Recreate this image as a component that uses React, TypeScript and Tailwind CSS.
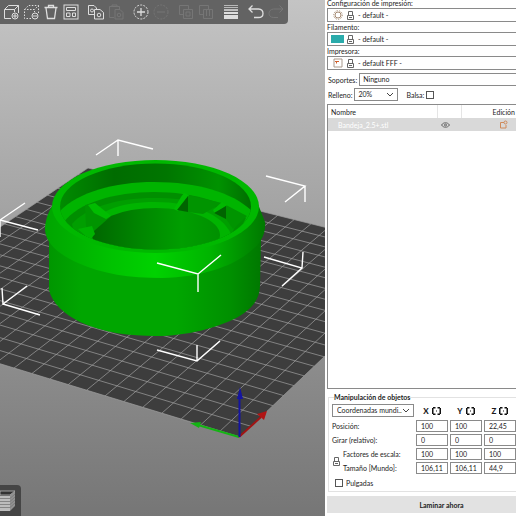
import type { ReactNode } from "react";

type Point = [number, number];

const BED_CORNERS: Point[] = [
  [240, 437],
  [-140, 321],
  [88, 168],
  [432, 254],
];

const BED_COLUMNS = 21;
const BED_ROWS = 20;

/** Projects a unit-square position on the print bed to scene coordinates. */
function project(u: number, v: number): Point {
  const [[x0, y0], [x1, y1], [x2, y2], [x3, y3]] = BED_CORNERS;
  const dx1 = x1 - x2;
  const dx2 = x3 - x2;
  const dy1 = y1 - y2;
  const dy2 = y3 - y2;
  const sx = x0 - x1 + x2 - x3;
  const sy = y0 - y1 + y2 - y3;
  const det = dx1 * dy2 - dx2 * dy1;
  const g = (sx * dy2 - dx2 * sy) / det;
  const h = (dx1 * sy - sx * dy1) / det;
  const w = g * u + h * v + 1;
  return [
    ((x1 - x0 + g * x1) * u + (x3 - x0 + h * x3) * v + x0) / w,
    ((y1 - y0 + g * y1) * u + (y3 - y0 + h * y3) * v + y0) / w,
  ];
}

function gridPath() {
  const parts: string[] = [];
  const seg = (a: Point, b: Point) => parts.push(`M${a[0]} ${a[1]}L${b[0]} ${b[1]}`);
  for (let i = 0; i <= BED_COLUMNS; i++) seg(project(i / BED_COLUMNS, 0), project(i / BED_COLUMNS, 1));
  for (let j = 0; j <= BED_ROWS; j++) seg(project(0, j / BED_ROWS), project(1, j / BED_ROWS));
  return parts.join("");
}

const BRACKETS = [
  "M96 155L118 140L153 149M118 140V156",
  "M266 176L305 186L285 202M305 186V202",
  "M25 203L0 220L38 230M0 220V237",
  "M2 288L3 304L27 286M3 304L40 315",
  "M264 257L302 268L282 286M302 268L303 252",
  "M157 350L197 361L220 341M197 361V345",
  "M157 263L198 274L221 255M198 274V292",
];

function Scene() {
  return (
    <svg
      viewBox="0 0 325 516"
      preserveAspectRatio="xMidYMid slice"
      className="block h-full w-full"
      role="img"
      aria-label="Vista 3D"
    >
      <defs>
        <linearGradient id="body">
          <stop offset="0" stopColor="#009600" />
          <stop offset="0.15" stopColor="#00a600" />
          <stop offset="0.6" stopColor="#00a600" />
          <stop offset="0.85" stopColor="#009000" />
          <stop offset="1" stopColor="#007800" />
        </linearGradient>
        <linearGradient id="flange">
          <stop offset="0" stopColor="#00a400" />
          <stop offset="0.3" stopColor="#00c200" />
          <stop offset="0.5" stopColor="#00d200" />
          <stop offset="0.75" stopColor="#00b400" />
          <stop offset="0.9" stopColor="#009000" />
          <stop offset="1" stopColor="#007800" />
        </linearGradient>
        <linearGradient id="wall">
          <stop offset="0" stopColor="#009000" />
          <stop offset="0.3" stopColor="#006c00" />
          <stop offset="0.55" stopColor="#007600" />
          <stop offset="0.8" stopColor="#009200" />
          <stop offset="1" stopColor="#006400" />
        </linearGradient>
        <linearGradient id="hole">
          <stop offset="0" stopColor="#006600" />
          <stop offset="0.35" stopColor="#008400" />
          <stop offset="0.7" stopColor="#009e00" />
          <stop offset="1" stopColor="#009000" />
        </linearGradient>
        <clipPath id="opening">
          <ellipse cx="155.5" cy="206.5" rx="95.5" ry="43" />
        </clipPath>
      </defs>

      <path
        d={`M${BED_CORNERS.map((p) => p.join(" ")).join("L")}Z`}
        fill="#3d3d3d"
      />
      <path d={gridPath()} stroke="#a0a0a0" strokeWidth="0.7" fill="none" />

      <path
        d="M49 238V290C52 303 64 314 80 322C104 333 130 336 156 336C186 336 218 328 238 317C251 309 260 300 260 285L261 238Z"
        fill="url(#body)"
      />
      <path
        d="M52 206C48 213 45 221 45 230C46 244 60 255 78 263C102 274 130 278 162 278C205 277 235 265 252 250C262 242 266 232 265 222L258 204Z"
        fill="url(#flange)"
      />
      <ellipse cx="155.5" cy="206.500" rx="103.500" ry="46.500" fill="#00b800" />
      <g clipPath="url(#opening)">
        <rect x="52" y="158" width="208" height="96" fill="url(#wall)" />
        <path d="M58 213C76 193 112 182 154 182C200 182 236 194 254 213L230 260H80Z" fill="#00b400" />
        <path d="M64 222C78 203 114 192 154 192C194 192 228 203 246 218L225 260H75Z" fill="#008e00" />
        <path d="M72 224C86 208 115 198 154 198C190 198 219 205 238 220L220 260H80Z" fill="#009e00" />
        <path d="M86 230C94 212 120 202 155 202C192 202 222 214 231 234L220 260H80Z" fill="#00b400" />
        <ellipse cx="156" cy="235" rx="64" ry="27" fill="url(#hole)" />
        <path d="M85 205L95 203L110 217L94 231L86 227Z" fill="#009400" />
        <path d="M88 205L95 203L111 216L106 219L94 213Z" fill="#00bc00" />
        <path d="M78 229L92 226L95 234L90 240Z" fill="#00b200" />
        <path d="M188 195L222 203L203 214L188 212Z" fill="#009400" />
        <path d="M181 197L184 193L189 195L178 211L174 209Z" fill="#00bc00" />
        <path d="M188 196V212L177 210Z" fill="#006400" />
        <path d="M226 205L247 216L233 229L226 219Z" fill="#009400" />
        <path d="M213 210L222 202L227 205L215 214Z" fill="#00b800" />
        <path d="M226 206V219L214 213Z" fill="#006400" />
      </g>

      {BRACKETS.map((d) => (
        <path key={d} d={d} fill="none" stroke="#fff" strokeWidth="1.4" />
      ))}

      <path d="M239 437L198 425" stroke="#14b414" strokeWidth="2" />
      <path d="M190 423L201 422L199 428Z" fill="#14b414" />
      <path d="M239 437L261 417" stroke="#a01414" strokeWidth="2" />
      <path d="M267 411L264 420L257 414Z" fill="#b01414" />
      <path d="M239.500 437V398" stroke="#1414a0" strokeWidth="2" />
      <path d="M240 387L243 399H237Z" fill="#1414a0" />
    </svg>
  );
}

function Glyph({ children }: { children: ReactNode }) {
  return (
    <svg viewBox="0 0 16 16" className="size-4" fill="none" stroke="currentColor" strokeWidth="1">
      {children}
    </svg>
  );
}

type Tool = { label: string; off?: boolean; art: ReactNode };

const TOOLS: Tool[][] = [
  [
    {
      label: "Añadir",
      art: (
        <>
          <path d="M8 14.500H1.500V5.500H11.500V8M1.500 5.500L5.500 1.500H15.500L11.500 5.500M15.500 1.500V9" />
          <circle cx="12" cy="12" r="3" />
          <path d="M12 10V14M10 12H14" />
        </>
      ),
    },
    {
      label: "Eliminar",
      art: (
        <>
          <path strokeDasharray="1.500 1.500" d="M8 14.500H1.500V5.500H11.500V8M1.500 5.500L5.500 1.500H15.500L11.500 5.500M15.500 1.500V9" />
          <circle cx="12" cy="12" r="3" />
          <path d="M10 12H14" />
        </>
      ),
    },
    {
      label: "Eliminar todo",
      art: <path strokeWidth="1.300" d="M1.500 3.500H14.500M5.500 3V1.500H10.500V3M3 4L4.500 14.500H11.500L13 4" />,
    },
    {
      label: "Organizar",
      art: (
        <>
          <rect x="1" y="1" width="14" height="14" />
          <path d="M3.500 3.500H12.500V6.500H3.500ZM3.500 9H7V12.500H3.500ZM9.500 9H12.500V12.500H9.500Z" />
        </>
      ),
    },
  ],
  [
    {
      label: "Copiar",
      art: (
        <>
          <path d="M6 10.500H0.500V1.500H6L8.500 4V5M6.500 5.500H12L15.500 8.500V15H6.500Z" />
          <circle cx="4" cy="6.500" r="1.500" />
          <circle cx="11" cy="11" r="1.800" />
        </>
      ),
    },
    {
      label: "Pegar",
      off: true,
      art: (
        <>
          <path d="M6 13.500H1.500V2.500H11.500V5M4 2.500V1H9V2.500M7 5.500H12L15 8.500V15H7Z" />
          <circle cx="11" cy="11" r="1.800" />
        </>
      ),
    },
  ],
  [
    {
      label: "Añadir instancia",
      art: (
        <>
          <circle cx="8" cy="8" r="7" strokeDasharray="2 1.200" />
          <path d="M8 4V12M4 8H12" strokeWidth="1.300" />
        </>
      ),
    },
    {
      label: "Quitar instancia",
      off: true,
      art: (
        <>
          <circle cx="8" cy="8" r="7" strokeDasharray="2 1.200" />
          <path d="M4 8H12" />
        </>
      ),
    },
  ],
  [
    {
      label: "Separar en objetos",
      off: true,
      art: <path d="M5 10.500H1.500V1.500H10.500V5M5.500 5.500H14.500V14.500H5.500ZM8 8H12V12H8Z" />,
    },
    {
      label: "Separar en piezas",
      off: true,
      art: <path d="M5 10.500H1.500V1.500H10.500V5M5.500 5.500H14.500V14.500H5.500ZM8.500 5.500V12M11.500 5.500V12" />,
    },
  ],
  [
    {
      label: "Altura de capa variable",
      art: (
        <>
          <path d="M1 1.500H15M1 3.500H15" opacity="0.7" />
          <path d="M1 6H15" strokeWidth="1.500" />
          <path d="M1 9H15" strokeWidth="2" />
          <path d="M1 13H15" strokeWidth="4" />
        </>
      ),
    },
  ],
  [
    { label: "Deshacer", art: <path strokeWidth="1.300" d="M4.500 1.500L1 5L4.500 8.500M1 5H10.500C16.500 5.500 16.500 13.500 10.500 13.500H6" /> },
    { label: "Rehacer", off: true, art: <path d="M11.500 1.500L15 5L11.500 8.500M15 5H5.500C-0.500 5.500 -0.500 13.500 5.500 13.500H10" /> },
  ],
];

function Toolbar() {
  return (
    <div className="absolute top-0 left-0 flex h-6 gap-[5px] rounded-br-sm bg-[#636363] pr-0.5 pl-px">
      {TOOLS.map((group) => (
        <div key={group[0].label} className="flex">
          {group.map((tool) => (
            <button
              key={tool.label}
              type="button"
              aria-label={tool.label}
              disabled={tool.off}
              className="flex w-5 items-center justify-center text-[#dedede] disabled:text-[#767676]"
            >
              <Glyph>{tool.art}</Glyph>
            </button>
          ))}
        </div>
      ))}
    </div>
  );
}

function Lock() {
  return (
    <svg viewBox="0 0 7 9" className="h-[9px] w-[7px] shrink-0" fill="none" stroke="#666">
      <path d="M1.500 4V0.500H5.500V4M0.500 4.500H6.500V8.500H0.500ZM2 6.500H5" />
    </svg>
  );
}

function Chevron() {
  return (
    <svg viewBox="0 0 8 5" className="pointer-events-none mr-[3px] h-[5px] w-2 shrink-0" fill="none" stroke="#444">
      <path d="M1 1L4 4L7 1" />
    </svg>
  );
}

function Preset({ id, label, value, children }: { id: string; label: string; value: string; children: ReactNode }) {
  return (
    <div className="mb-px">
      <label htmlFor={id} className="block h-[9px] leading-[9px]">
        {label}
      </label>
      <div className="flex h-[14px] items-center gap-[3px] border border-r-0 border-[#8a8a8a] pl-[3px]">
        <span className="flex w-[13px] justify-center">{children}</span>
        <Lock />
        <select id={id} className="h-3 min-w-0 flex-1 appearance-none bg-transparent pl-px leading-3 outline-none">
          <option>{value}</option>
        </select>
      </div>
    </div>
  );
}

function Reset() {
  return (
    <svg viewBox="0 0 9 8" className="h-2 w-[9px]" fill="#111">
      <path d="M0 1H1V0H3.500V1.500H1.500V6.500H3.500V8H1V7H0ZM9 1H8V0H5.500V1.500H7.500V6.500H5.500V8H8V7H9Z" />
      <rect x="4" y="3.500" width="1" height="1" />
    </svg>
  );
}

const ROWS = [
  { label: "Posición:", values: ["100", "100", "22,45"] },
  { label: "Girar (relativo):", values: ["0", "0", "0"] },
  { label: "Factores de escala:", values: ["100", "100", "100"], inset: true },
  { label: "Tamaño [Mundo]:", values: ["106,11", "106,11", "44,9"], inset: true },
];

const AXES = ["X", "Y", "Z"];

function Field({ row, axis, value }: { row: string; axis: string; value: string }) {
  return (
    <input
      aria-label={`${row} ${axis}`}
      defaultValue={value}
      className="h-3 w-full min-w-0 border border-[#8a8a8a] bg-white pl-1 leading-[10px] outline-none"
    />
  );
}

function Manipulation() {
  return (
    <fieldset className="mt-[3px] ml-px min-w-0 border border-r-0 border-[#e2e2e2] pb-0.5 pl-[3px]">
      <legend className="ml-0.5 h-[10px] leading-[10px] font-bold">Manipulación de objetos</legend>
      <div className="mt-0.5 grid grid-cols-[82px_repeat(3,minmax(32px,1fr))] items-center gap-x-0.5">
        <div className="flex h-[13px] items-center border border-[#8a8a8a]">
          <select
            aria-label="Sistema de coordenadas"
            className="h-[11px] min-w-0 flex-1 appearance-none bg-transparent pl-1 leading-[11px] outline-none"
          >
            <option>Coordenadas mundi...</option>
          </select>
          <Chevron />
        </div>
        {AXES.map((axis) => (
          <span key={axis} className="flex h-[13px] items-center justify-center gap-[3px] text-[8px] font-black">
            {axis}
            <Reset />
          </span>
        ))}
      </div>
      <div className="relative mt-0.5 flex flex-col gap-px">
        {ROWS.map((row) => (
          <div
            key={row.label}
            className="grid h-[13px] grid-cols-[82px_repeat(3,minmax(32px,1fr))] items-center gap-x-0.5"
          >
            <span className={row.inset ? "pl-[11px]" : ""}>{row.label}</span>
            {row.values.map((value, i) => (
              <Field key={AXES[i]} row={row.label} axis={AXES[i]} value={value} />
            ))}
          </div>
        ))}
        <span className="absolute bottom-2 left-px">
          <Lock />
        </span>
      </div>
      <label className="mt-[3px] ml-[3px] flex h-3 items-center gap-[3px]">
        <input type="checkbox" className="size-2 appearance-none border border-[#555]" />
        Pulgadas
      </label>
    </fieldset>
  );
}

function ObjectList() {
  return (
    <div className="mt-[3px] min-h-[120px] flex-1 border border-r-0 border-[#8a8a8a]">
      <table className="w-full table-fixed border-collapse text-left">
        <thead>
          <tr className="h-[13px]">
            <th className="pl-[3px] font-normal">Nombre</th>
            <th className="w-6 border-x border-[#e5e5e5]" aria-label="Visible" />
            <th className="w-[55px] pr-px text-right font-normal">Edición</th>
          </tr>
        </thead>
        <tbody>
          <tr className="h-[13px] bg-[#d9d9d9]">
            <td className="pl-2.5 text-white">Bandeja_2.5+.stl</td>
            <td>
              <svg viewBox="0 0 9 6" className="mr-auto ml-1 h-1.5 w-[9px]" fill="none" stroke="#666">
                <path d="M0.500 3C2.500 0 6.500 0 8.500 3C6.500 6 2.500 6 0.500 3Z" />
                <circle cx="4.500" cy="3" r="1" />
              </svg>
            </td>
            <td>
              <svg viewBox="0 0 9 9" className="mr-2 ml-auto size-[9px]" fill="none" stroke="#d08a5a">
                <path d="M5 2.500H1.500V8H7V5" />
                <circle cx="6.500" cy="2.500" r="1.500" />
              </svg>
            </td>
          </tr>
        </tbody>
      </table>
    </div>
  );
}

export default function App() {
  return (
    <div className="flex h-screen min-h-[400px] overflow-hidden bg-white font-[Lato,'Open_Sans',sans-serif] text-[7px] leading-[10px] text-[#1c1c1c]">
      <main className="relative min-w-0 flex-1 bg-linear-to-b from-[#c4c4c4] to-[#767676]">
        <Scene />
        <Toolbar />
        <button
          type="button"
          aria-label="Vista de capas"
          className="absolute bottom-0 left-0 flex h-[31px] w-[21px] items-center rounded-tr-sm bg-[#454545]"
        >
          <svg viewBox="0 0 16 22" className="h-[22px] w-4">
            <path d="M0 1H15L10 5H0Z" fill="#333" stroke="#ccc" strokeWidth="0.700" />
            <path d="M0 6H10V21H0Z" fill="#bdbdbd" />
            <path d="M10 5L15 1V16L10 21Z" fill="#929292" />
            <path d="M0 8.500H10L15 4M0 11.500H10L15 7M0 14.500H10L15 10M0 17.500H10L15 13" stroke="#777" strokeWidth="0.800" fill="none" />
          </svg>
        </button>
      </main>

      <aside className="-mt-px flex w-[191px] shrink-0 flex-col pb-[3px] pl-0.5">
        <Preset id="print" label="Configuración de impresión:" value="- default -">
          <svg viewBox="0 0 10 10" className="size-2.5" fill="none" stroke="#a58a72">
            <circle cx="5" cy="5" r="3" />
            <circle cx="5" cy="5" r="4.300" strokeDasharray="1.300 1.300" />
          </svg>
        </Preset>
        <Preset id="filament" label="Filamento:" value="- default -">
          <span className="h-2 w-[13px] bg-[#2aabab]" />
        </Preset>
        <Preset id="printer" label="Impresora:" value="- default FFF -">
          <svg viewBox="0 0 10 10" className="size-2.5" fill="none">
            <path d="M1 1H9V9H1Z" stroke="#a8998c" />
            <path d="M2 3.500H6M3.500 3.500V5.500" stroke="#d0602c" />
          </svg>
        </Preset>

        <div className="mt-0.5 flex items-center gap-0.5 pl-px">
          <label htmlFor="supports">Soportes:</label>
          <select
            id="supports"
            className="h-[13px] min-w-0 flex-1 appearance-none border border-r-0 border-[#8a8a8a] bg-white pl-[3px] leading-[11px] outline-none"
          >
            <option>Ninguno</option>
          </select>
        </div>
        <div className="mt-0.5 flex items-center pl-px">
          <label htmlFor="infill">Relleno:</label>
          <div className="ml-0.5 flex h-[13px] w-11 items-center border border-[#8a8a8a]">
            <select
              id="infill"
              className="h-[11px] min-w-0 flex-1 appearance-none bg-transparent pl-[3px] leading-[11px] outline-none"
            >
              <option>20%</option>
            </select>
            <Chevron />
          </div>
          <label className="ml-2 flex items-center gap-0.5">
            Balsa:
            <input type="checkbox" className="size-2 appearance-none border border-[#555]" />
          </label>
        </div>

        <ObjectList />
        <Manipulation />
        <button type="button" className="mt-1 h-[17px] shrink-0 bg-[#e2e2e2] pr-0 pl-10 font-bold">
          Laminar ahora
        </button>
      </aside>
    </div>
  );
}
